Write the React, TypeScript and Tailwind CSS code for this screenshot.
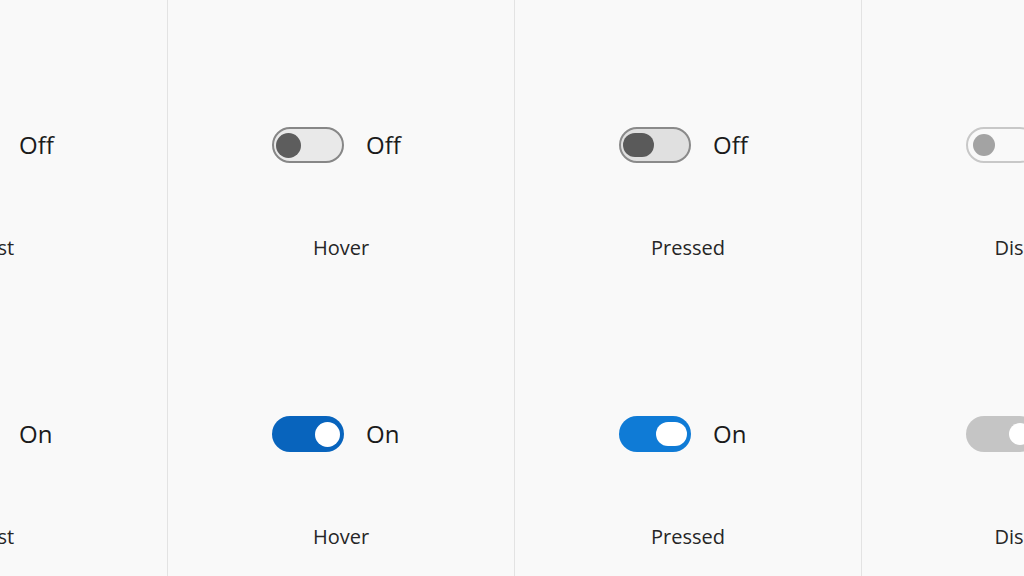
import React from 'react';

type State = 'Rest' | 'Hover' | 'Pressed' | 'Disabled';

const toggleStyles: Record<State, { off: string; offThumb: string; on: string; onThumb: string; pad: string }> = {
  Rest: {
    off: 'border-2 border-[#868686] bg-[#f3f3f3] justify-start',
    offThumb: 'w-[22px] h-[22px] bg-[#5d5d5d]',
    on: 'bg-[#0067c0] justify-end',
    onThumb: 'w-[22px] h-[22px] bg-white',
    pad: 'px-[5px]',
  },
  Hover: {
    off: 'border-2 border-[#878787] bg-[#e9e9e9] justify-start',
    offThumb: 'w-[25px] h-[25px] bg-[#5d5d5d]',
    on: 'bg-[#0864bd] justify-end',
    onThumb: 'w-[25px] h-[25px] bg-white',
    pad: 'px-[2px]',
  },
  Pressed: {
    off: 'border-2 border-[#8a8a8a] bg-[#e0e0e0] justify-start',
    offThumb: 'w-[31px] h-[24px] bg-[#5a5a5a]',
    on: 'bg-[#0f7bd6] justify-end',
    onThumb: 'w-[31px] h-[24px] bg-white',
    pad: 'px-[2px]',
  },
  Disabled: {
    off: 'border-2 border-[#c8c8c8] bg-[#f9f9f9] justify-start',
    offThumb: 'w-[22px] h-[22px] bg-[#a3a3a3]',
    on: 'bg-[#c5c5c5] justify-end',
    onThumb: 'w-[22px] h-[22px] bg-white',
    pad: 'px-[5px]',
  },
};

const states: State[] = ['Rest', 'Hover', 'Pressed', 'Disabled'];

const Toggle = ({ state, on }: { state: State; on: boolean }) => {
  const s = toggleStyles[state];
  const onPad = state === 'Rest' || state === 'Disabled' ? 'px-[7px]' : 'px-[4px]';
  return (
    <div
      className={`flex items-center w-[72px] h-[36px] rounded-full box-border ${
        on ? `${s.on} ${onPad}` : `${s.off} ${s.pad}`
      }`}
    >
      <div className={`rounded-full ${on ? s.onThumb : s.offThumb}`} />
    </div>
  );
};

const Cell = ({ state, on }: { state: State; on: boolean }) => (
  <div className="flex flex-col h-[289px] pt-[127px]">
    <div className="flex items-center gap-[22px] pl-[104px] h-[36px]">
      <Toggle state={state} on={on} />
      <span className="text-[24px] leading-none text-[#1b1b1b]">{on ? 'On' : 'Off'}</span>
    </div>
    <div className="mt-[71px] text-center text-[20px] leading-[28px] text-[#262626]">
      {state}
    </div>
  </div>
);

export default function App() {
  return (
    <div
      className="w-[1024px] h-[576px] overflow-hidden bg-[#f9f9f9]"
      style={{ fontFamily: '"Open Sans", "Noto Sans", sans-serif' }}
    >
      <div className="flex ml-[-179px] w-max">
        {states.map((st) => (
          <div key={st} className="w-[347px] shrink-0 border-r border-[#e3e3e3] h-[576px]">
            <Cell state={st} on={false} />
            <Cell state={st} on={true} />
          </div>
        ))}
      </div>
    </div>
  );
}
